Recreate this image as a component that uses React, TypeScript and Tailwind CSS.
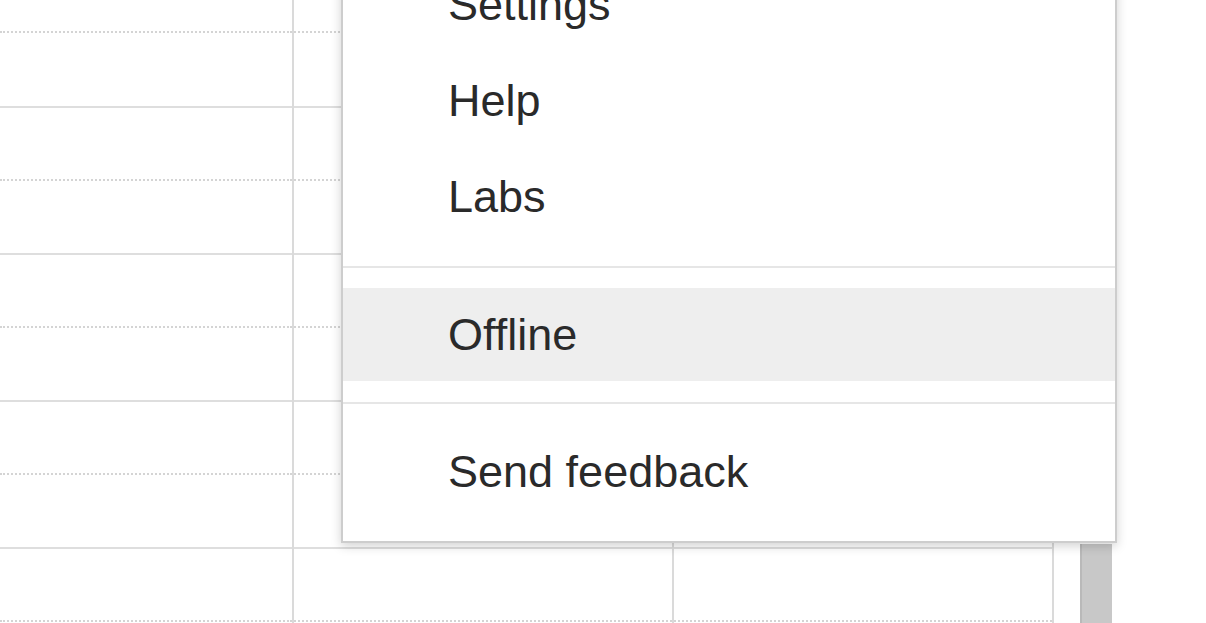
import React from "react";

const HourBlock = () => (
  <div className="flex flex-col border-t-2 border-solid border-[#dedede]">
    <div className="h-[73px] border-b-2 border-dotted border-[#d4d4d4]" />
    <div className="h-[72px]" />
  </div>
);

const Column = ({ width }: { width: string }) => (
  <div className={`${width} flex shrink-0 flex-col border-r-2 border-[#dadada]`}>
    <div className="h-[33px] border-b-2 border-dotted border-[#d4d4d4]" />
    <div className="h-[73px]" />
    <HourBlock />
    <HourBlock />
    <HourBlock />
    <HourBlock />
  </div>
);

const items = ["Settings", "Help", "Labs"];

export default function App() {
  return (
    <div
      className="relative h-[623px] w-[1206px] overflow-hidden bg-white"
      style={{ fontFamily: '"Liberation Sans", Arial, sans-serif' }}
    >
      <div className="flex">
        <Column width="w-[294px]" />
        <Column width="w-[380px]" />
        <Column width="w-[380px]" />
        <div className="flex flex-col pl-[26px] pt-[544px]">
          <div className="h-[120px] w-[32px] border-l-2 border-[#b9b9b9] bg-[#c8c8c8]" />
        </div>
      </div>

      <div className="absolute left-[341px] top-[-60px] w-[776px] border-2 border-[#cdcdcd] bg-white pt-[14px] pb-[23px] shadow-[0_3px_10px_rgba(0,0,0,0.18)]">
        {items.map((t) => (
          <div key={t} className="flex h-[96px] items-center pl-[105px] text-[45px] leading-none text-[#2a2a2a]">
            {t}
          </div>
        ))}
        <div className="mb-[20px] mt-[22px] h-[2px] bg-[#e6e6e6]" />
        <div className="flex h-[93px] items-center bg-[#eeeeee] pl-[105px] text-[45px] leading-none text-[#2a2a2a]">
          Offline
        </div>
        <div className="mb-[21px] mt-[21px] h-[2px] bg-[#e6e6e6]" />
        <div className="flex h-[93px] items-center pl-[105px] text-[45px] leading-none text-[#2a2a2a]">
          Send feedback
        </div>
      </div>
    </div>
  );
}
